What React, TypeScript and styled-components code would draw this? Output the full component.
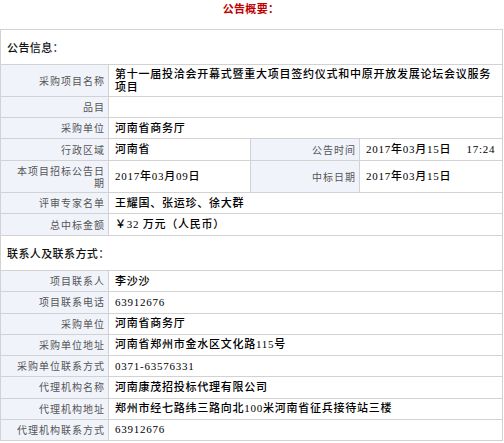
import React from "react";
import styled, { createGlobalStyle } from "styled-components";

const Global = createGlobalStyle`
  html, body { margin: 0; padding: 0; background: #fff; }
  body { font-family: "Noto Sans CJK SC", "Liberation Sans", sans-serif; }
`;

const Page = styled.div`
  width: 504px;
`;

const Title = styled.div`
  height: 29px;
  box-sizing: border-box;
  padding-top: 1px;
  padding-right: 2px;
  text-align: center;
  font-size: 11px;
  letter-spacing: 0.3px;
  line-height: 14px;
  font-weight: bold;
  color: #c00000;
`;

const Table = styled.div`
  width: 503px;
  box-sizing: border-box;
  border: 1px solid #d2d2d2;
  border-bottom: none;
`;

const Section = styled.div`
  min-height: 34px;
  border-bottom: 1px solid #d2d2d2;
  display: flex;
  align-items: center;
  padding-left: 6px;
  font-size: 11px;
  letter-spacing: 0.4px;
  font-weight: 500;
  color: #111;
`;

const Row = styled.div<{ $four?: boolean; $h?: number }>`
  display: grid;
  grid-template-columns: ${(p) => (p.$four ? "108px 142px 109px 1fr" : "108px 1fr")};
  min-height: ${(p) => p.$h ?? 20.3}px;
  border-bottom: 1px solid #d2d2d2;
`;

const Label = styled.div`
  background: #f1f3fb;
  border-right: 1px solid #d2d2d2;
  color: #555;
  font-size: 10px;
  letter-spacing: 1px;
  line-height: 12px;
  text-align: right;
  padding: 2px 3px 2px 6px;
  display: flex;
  align-items: center;
  justify-content: flex-end;
`;

const Value = styled.div<{ $span?: boolean; $divide?: boolean }>`
  grid-column: ${(p) => (p.$span ? "2 / -1" : "auto")};
  ${(p) => (p.$divide ? "border-right: 1px solid #d2d2d2;" : "")}
  color: #000;
  font-family: "Liberation Serif", "Noto Sans CJK SC", serif;
  font-size: 11px;
  letter-spacing: 0.75px;
  font-weight: 500;
  line-height: 13px;
  padding: 2px 4px 2px 6px;
  display: flex;
  align-items: center;
`;

type Pair = [string, string];

const top1: Pair[] = [
  ["采购项目名称", "第十一届投洽会开幕式暨重大项目签约仪式和中原开放发展论坛会议服务项目"],
  ["品目", ""],
  ["采购单位", "河南省商务厅"],
];

const contacts: Pair[] = [
  ["项目联系人", "李沙沙"],
  ["项目联系电话", "63912676"],
  ["采购单位", "河南省商务厅"],
  ["采购单位地址", "河南省郑州市金水区文化路115号"],
  ["采购单位联系方式", "0371-63576331"],
  ["代理机构名称", "河南康茂招投标代理有限公司"],
  ["代理机构地址", "郑州市经七路纬三路向北100米河南省征兵接待站三楼"],
  ["代理机构联系方式", "63912676"],
];

export default function App() {
  return (
    <Page>
      <Global />
      <Title>公告概要：</Title>
      <Table>
        <Section>公告信息：</Section>
        {top1.map(([k, v], i) => (
          <Row key={k + i} $h={i === 0 ? 31 : 20}>
            <Label>{k}</Label>
            <Value $span>{v}</Value>
          </Row>
        ))}
        <Row $four $h={21}>
          <Label>行政区域</Label>
          <Value $divide>河南省</Value>
          <Label>公告时间</Label>
          <Value>2017年03月15日&nbsp;　17:24</Value>
        </Row>
        <Row $four $h={31}>
          <Label>本项目招标公告日期</Label>
          <Value $divide>2017年03月09日</Value>
          <Label>中标日期</Label>
          <Value>2017年03月15日</Value>
        </Row>
        <Row $h={20}>
          <Label>评审专家名单</Label>
          <Value $span>王耀国、张运珍、徐大群</Value>
        </Row>
        <Row $h={21}>
          <Label>总中标金额</Label>
          <Value $span>￥32 万元（人民币）</Value>
        </Row>
        <Section>联系人及联系方式：</Section>
        {contacts.map(([k, v], i) => (
          <Row key={k + i} $h={20.25}>
            <Label>{k}</Label>
            <Value $span>{v}</Value>
          </Row>
        ))}
      </Table>
    </Page>
  );
}
